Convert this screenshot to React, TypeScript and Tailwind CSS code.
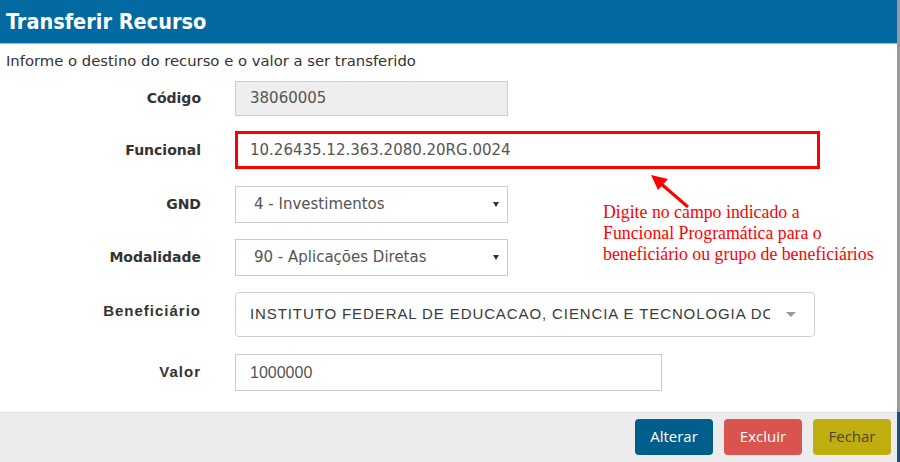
import React from 'react';

const sans = { fontFamily: '"DejaVu Sans", Verdana, sans-serif' };
const arial = { fontFamily: '"Liberation Sans", Arial, sans-serif' };

function Label({ children, narrow }: { children: React.ReactNode; narrow?: boolean }) {
    return (
        <div
            className={`w-[201px] shrink-0 text-right font-bold text-[#333] ${narrow ? 'text-[15px] tracking-[1px]' : 'text-[14px]'}`}
            style={narrow ? arial : sans}
        >
            {children}
        </div>
    );
}

function Caret() {
    return <span className="w-0 h-0 border-l-[3.5px] border-r-[3.5px] border-t-[5px] border-l-transparent border-r-transparent border-t-[#333]" />;
}

export default function App() {
    return (
        <div className="w-[900px] h-[462px] flex bg-white overflow-hidden" style={sans}>
            <div className="relative w-[897px] h-full flex flex-col bg-white">
                <div className="h-[44px] shrink-0 bg-[#026aa0] border-b border-[#8fbcd6] flex items-center px-[6px]">
                    <h1
                        className="text-white font-bold text-[21.5px] leading-none"
                        style={{ fontFamily: '"DejaVu Sans Condensed", "DejaVu Sans", sans-serif' }}
                    >
                        Transferir Recurso
                    </h1>
                </div>

                <div className="flex-1 flex flex-col">
                    <p className="px-[6px] pt-[8px] text-[14.8px] text-[#333] leading-[18px]">
                        Informe o destino do recurso e o valor a ser transferido
                    </p>

                    <div className="flex items-center mt-[11px]">
                        <Label>Código</Label>
                        <div className="ml-[34px] w-[273px] h-[35px] bg-[#eeeeee] border border-[#cccccc] flex items-center px-[14px] text-[15px] text-[#555]">
                            38060005
                        </div>
                    </div>

                    <div className="flex items-center mt-[15px]">
                        <Label>Funcional</Label>
                        <div className="ml-[34px] w-[585px] h-[38px] border-[3px] border-[#ff0000] flex items-center px-[12px] text-[15px] text-[#555]">
                            10.26435.12.363.2080.20RG.0024
                        </div>
                    </div>

                    <div className="flex items-center mt-[17px]">
                        <Label>GND</Label>
                        <div className="ml-[34px] w-[273px] h-[37px] border border-[#cccccc] flex items-center justify-between pl-[18px] pr-[8px] text-[15px] text-[#555]">
                            <span>4 - Investimentos</span>
                            <Caret />
                        </div>
                    </div>

                    <div className="flex items-center mt-[16px]">
                        <Label>Modalidade</Label>
                        <div className="ml-[34px] w-[273px] h-[37px] border border-[#cccccc] flex items-center justify-between pl-[18px] pr-[8px] text-[15px] text-[#555]">
                            <span>90 - Aplicações Diretas</span>
                            <Caret />
                        </div>
                    </div>

                    <div className="flex items-start mt-[16px]">
                        <div className="pt-[8px]">
                            <Label narrow>Beneficiário</Label>
                        </div>
                        <div
                            className="ml-[34px] w-[580px] h-[45px] border border-[#d0d0d0] rounded-[4px] flex items-center pl-[14px] pr-[18px] text-[15px] tracking-[0.9px] text-[#3a3a3a]"
                            style={arial}
                        >
                            <span className="w-[520px] overflow-hidden whitespace-nowrap">
                                INSTITUTO FEDERAL DE EDUCACAO, CIENCIA E TECNOLOGIA DO RIO GRANDE DO SUL
                            </span>
                            <span className="ml-auto w-0 h-0 border-l-[5px] border-r-[5px] border-t-[5px] border-l-transparent border-r-transparent border-t-[#999]" />
                        </div>
                    </div>

                    <div className="flex items-center mt-[17px]">
                        <Label narrow>Valor</Label>
                        <div
                            className="ml-[34px] w-[427px] h-[37px] border border-[#cccccc] flex items-center px-[14px] text-[16px] text-[#555]"
                            style={arial}
                        >
                            1000000
                        </div>
                    </div>
                </div>

                <div
                    className="h-[50px] shrink-0 bg-[#ececec] border-t border-[#e2e2e2] flex items-center justify-end gap-[11px] pr-[6px] pb-[2px]"
                    style={{ fontFamily: '"Open Sans", sans-serif' }}
                >
                    <button className="w-[78px] h-[36px] rounded-[4px] bg-[#005d8c] text-white text-[15px]">Alterar</button>
                    <button className="w-[78px] h-[36px] rounded-[4px] bg-[#d9534f] text-white text-[15px]">Excluir</button>
                    <button className="w-[78px] h-[36px] rounded-[4px] bg-[#c0ad0e] text-[#4b4632] text-[15px]">Fechar</button>
                </div>

                <svg className="absolute left-[640px] top-[166px]" width="60" height="48" viewBox="0 0 60 48">
                    <line x1="48" y1="41" x2="19" y2="16" stroke="#ff0000" strokeWidth="3" />
                    <polygon points="11,9 28,13 18,24" fill="#ff0000" />
                </svg>

                <div
                    className="absolute left-[603px] top-[202px] text-[17.8px] leading-[21px] text-[#ff0000] whitespace-nowrap"
                    style={{ fontFamily: '"Liberation Serif", "Times New Roman", serif' }}
                >
                    Digite no campo indicado a<br />
                    Funcional Programática para o<br />
                    beneficiário ou grupo de beneficiários
                </div>
            </div>
            <div className="w-[3px] h-full bg-[#9a9a9a] flex flex-col justify-end">
                <div className="h-[50px] bg-[#1d4f7c]" />
            </div>
        </div>
    );
}
